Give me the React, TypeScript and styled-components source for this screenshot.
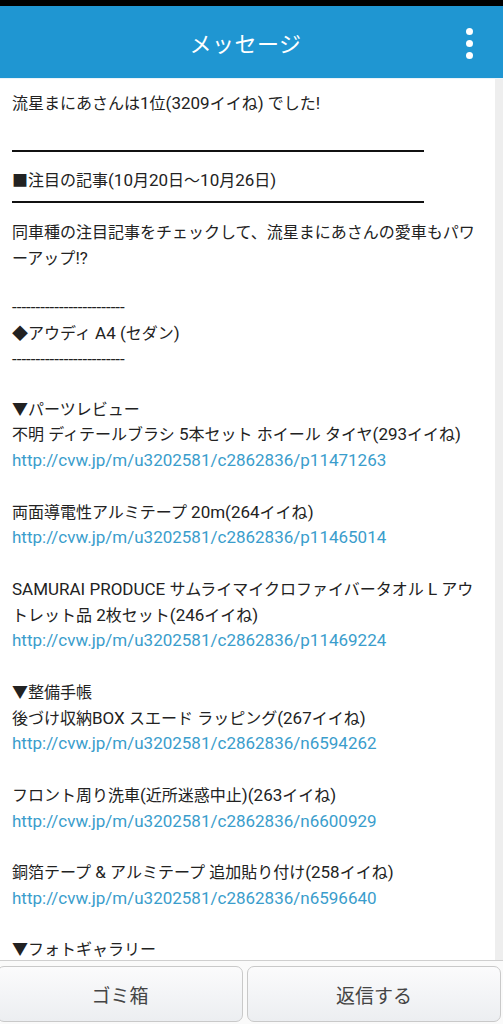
import React from 'react';
import styled, { createGlobalStyle } from 'styled-components';

const GlobalStyle = createGlobalStyle`
  html, body {
    margin: 0;
    padding: 0;
    background: #ffffff;
  }
  body {
    font-family: Roboto, "Noto Sans CJK JP", sans-serif;
  }
`;

const Screen = styled.div`
  width: 503px;
  height: 1024px;
  display: flex;
  flex-direction: column;
  overflow: hidden;
  background: #ffffff;
`;

const StatusBar = styled.div`
  height: 6px;
  background: #000000;
`;

const Header = styled.header`
  height: 72px;
  background: #1f96d2;
  display: flex;
  align-items: center;
  justify-content: center;
  position: relative;
  padding-right: 12px;
`;

const Title = styled.h1`
  margin: 0;
  font-size: 22px;
  font-weight: 400;
  color: #ffffff;
  letter-spacing: 0.5px;
`;

const MenuButton = styled.div`
  position: absolute;
  right: 30px;
  top: 22px;
  display: flex;
  flex-direction: column;
  gap: 5px;
`;

const Dot = styled.span`
  width: 7px;
  height: 7px;
  border-radius: 50%;
  background: #ffffff;
`;

const Body = styled.main`
  flex: 1;
  display: flex;
  min-height: 0;
  border-top: 1px solid #e9f3f9;
`;

const Content = styled.div`
  flex: 1;
  padding: 12px 15px 0 12px;
  overflow: hidden;
  font-size: 16px;
  line-height: 25.75px;
  color: #222222;
`;

const ScrollTrack = styled.div`
  width: 8px;
  background: #eeeeee;
`;

const Line = styled.div<{ $h?: number }>`
  min-height: ${(p) => p.$h ?? 25.75}px;
  word-break: break-all;
`;

const Run = styled.span<{ $latin?: boolean }>`
  font-size: ${(p) => (p.$latin ? 17 : 16)}px;
  line-height: 1;
`;

const Link = styled.a`
  display: block;
  font-size: 17px;
  color: #3a9dcc;
  text-decoration: none;
`;

const Rule = styled.div`
  height: 25.75px;
  padding-top: 7px;
  box-sizing: border-box;

  &::after {
    content: '';
    display: block;
    width: 412px;
    height: 2px;
    background: #111111;
  }
`;

const Footer = styled.footer`
  height: 64px;
  border-top: 1px solid #cfcfcf;
  background: #fafafa;
  display: grid;
  grid-template-columns: 246px 1fr;
  gap: 4px;
  padding: 5px 2px 2px 0;
  margin-left: -3px;
  box-sizing: border-box;
`;

const FooterButton = styled.button`
  border: 1px solid #c9c9c9;
  border-radius: 7px;
  background: linear-gradient(#fbfbfc, #eceef1);
  font-family: Roboto, "Noto Sans CJK JP", sans-serif;
  font-size: 19px;
  color: #444444;
  padding: 0;
`;

// ASCII runs sit a touch larger than the Japanese glyphs, as on the device
function Txt({ text }: { text: string }) {
  const runs = text.split(/([\x20-\x7E]+)/).filter(Boolean);
  return (
    <>
      {runs.map((run, i) => (
        <Run key={i} $latin={/^[\x20-\x7E]+$/.test(run)}>{run}</Run>
      ))}
    </>
  );
}

type Item = { title: string; url: string };

const parts: Item[] = [
  { title: '不明 ディテールブラシ 5本セット ホイール タイヤ(293イイね)', url: 'http://cvw.jp/m/u3202581/c2862836/p11471263' },
  { title: '両面導電性アルミテープ 20m(264イイね)', url: 'http://cvw.jp/m/u3202581/c2862836/p11465014' },
  { title: 'SAMURAI PRODUCE サムライマイクロファイバータオル L アウトレット品 2枚セット(246イイね)', url: 'http://cvw.jp/m/u3202581/c2862836/p11469224' },
];

const notes: Item[] = [
  { title: '後づけ収納BOX スエード ラッピング(267イイね)', url: 'http://cvw.jp/m/u3202581/c2862836/n6594262' },
  { title: 'フロント周り洗車(近所迷惑中止)(263イイね)', url: 'http://cvw.jp/m/u3202581/c2862836/n6600929' },
  { title: '銅箔テープ & アルミテープ 追加貼り付け(258イイね)', url: 'http://cvw.jp/m/u3202581/c2862836/n6596640' },
];

function Section({ heading, items }: { heading: string; items: Item[] }) {
  return (
    <>
      <Line>{heading}</Line>
      {items.map((item, i) => (
        <React.Fragment key={item.url}>
          {i > 0 && <Line />}
          <Line><Txt text={item.title} /></Line>
          <Link href={item.url}>{item.url}</Link>
        </React.Fragment>
      ))}
      <Line />
    </>
  );
}

export default function App() {
  return (
    <Screen>
      <GlobalStyle />
      <StatusBar />
      <Header>
        <Title>メッセージ</Title>
        <MenuButton>
          <Dot />
          <Dot />
          <Dot />
        </MenuButton>
      </Header>
      <Body>
        <Content>
          <Line><Txt text="流星まにあさんは1位(3209イイね) でした!" /></Line>
          <Line />
          <Rule />
          <Line><Txt text="■注目の記事(10月20日～10月26日)" /></Line>
          <Rule />
          <Line><Txt text="同車種の注目記事をチェックして、流星まにあさんの愛車もパワーアップ!?" /></Line>
          <Line $h={24} />
          <Line><Txt text="------------------------" /></Line>
          <Line><Txt text="◆アウディ A4 (セダン)" /></Line>
          <Line><Txt text="------------------------" /></Line>
          <Line $h={24} />
          <Section heading="▼パーツレビュー" items={parts} />
          <Section heading="▼整備手帳" items={notes} />
          <Line>▼フォトギャラリー</Line>
        </Content>
        <ScrollTrack />
      </Body>
      <Footer>
        <FooterButton>ゴミ箱</FooterButton>
        <FooterButton>返信する</FooterButton>
      </Footer>
    </Screen>
  );
}
